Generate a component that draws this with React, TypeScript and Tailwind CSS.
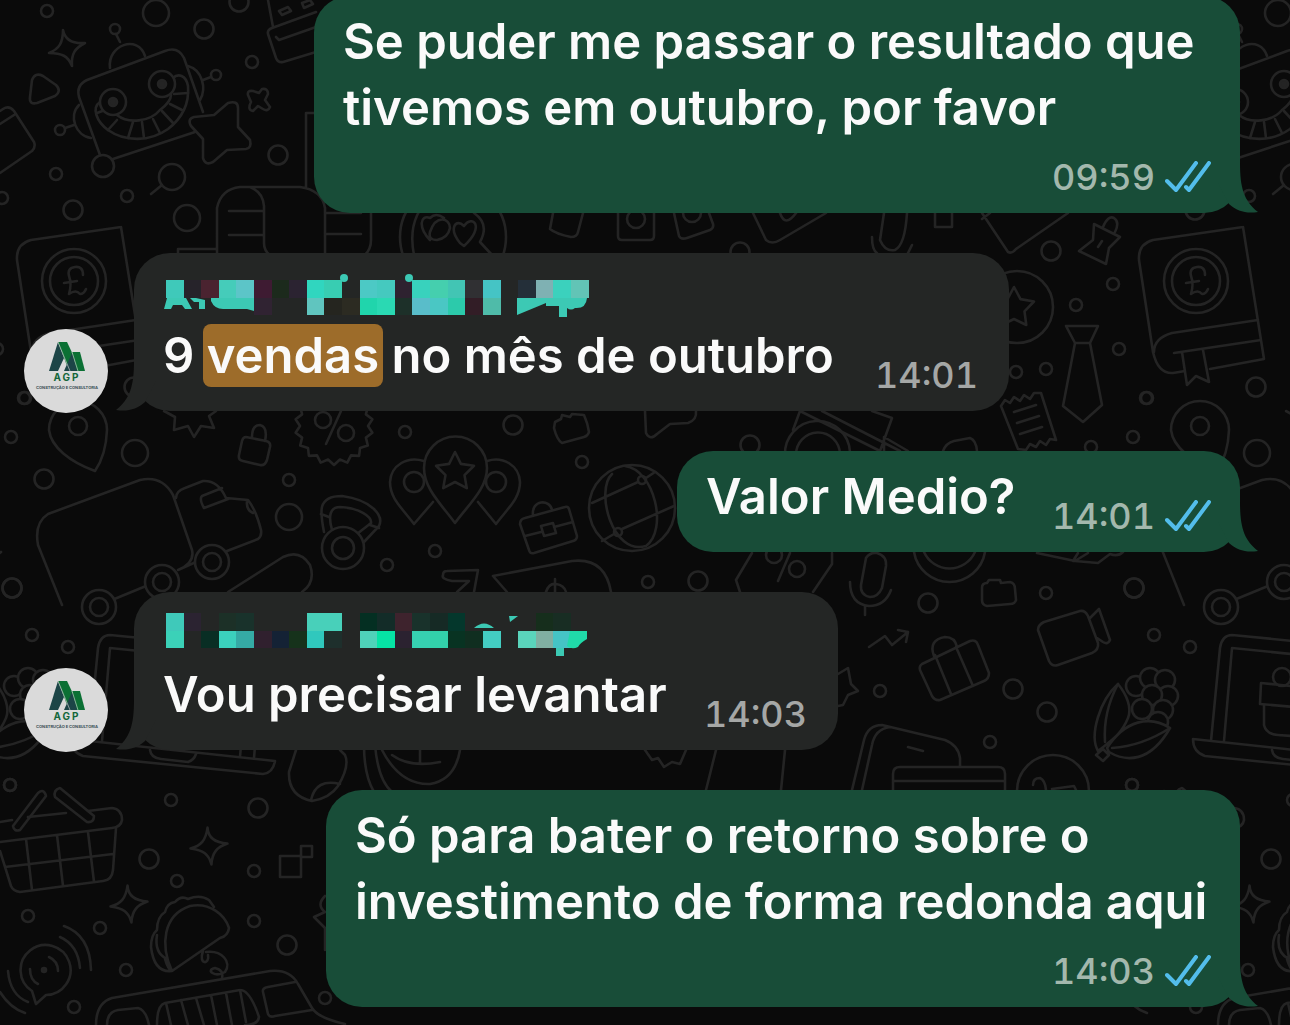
import type { ReactNode } from "react";
import clsx from "clsx";

const SMALL = [
  [47, 11], [252, 62], [56, 174], [127, 196], [2, 198], [25, 398], [11, 437], [405, 432], [289, 480],
  [582, 462], [387, 565], [435, 551], [648, 582], [1113, 284], [1076, 305], [1119, 349], [1146, 398],
  [1046, 369], [1016, 372], [1091, 447], [1046, 593], [880, 691], [990, 742], [1154, 635],
  [1190, 647], [1132, 785], [171, 800], [177, 881], [254, 871], [254, 921], [126, 970],
  [28, 916], [100, 928], [74, 1007], [325, 998],
];

const MEDIUM = [
  [204, 29], [239, 2], [278, 155], [73, 210], [44, 479], [513, 425], [12, 588], [1051, 251], [134, 387],
  [750, 445], [928, 603], [1134, 588], [1013, 689], [1047, 712], [698, 581], [258, 808], [149, 859],
  [287, 945], [740, 252],
];

const LARGE = [[156, 13], [172, 177], [187, 218], [135, 453], [289, 517]];

const KERNELS = [
  [1136, 686], [1150, 678], [1165, 680], [1168, 696], [1152, 695], [1163, 710], [1158, 722], [1142, 709],
];

const DOODLES = [
  // magnifier, play triangle, note
  "M162 185 L151 194",
  "M32 80 Q35 72 43 76 L56 85 Q62 91 55 96 L37 103 Q29 105 30 97 Z",
  "M0 173 L32 151 Q36 147 34 142 L14 111 Q9 105 3 109 L0 111 M14 115 L0 124",
  // robot
  "M100 155 L79 97 Q76 85 87 80 L165 51 Q178 46 184 58 L203 112 M113 159 L195 132",
  "M110 68 C107 45 138 34 145 56 M120 42 L116 34",
  "M79 105 C68 116 76 136 91 138 M74 125 L65 128 M188 66 C202 70 207 88 200 100 M203 80 L211 77",
  "M100 102 C91 108 97 122 108 130 C125 142 150 142 168 129 C186 115 189 98 188 86 C186 75 178 73 173 78 M117 115 C128 124 150 122 160 110 C168 104 171 98 171 95",
  "M97 113 L105 110 M108 130 L117 120 M128 138 L133 122 M144 138 L142 122 M160 133 L153 119 M173 123 L162 111 M182 110 L170 104 M188 93 L174 94",
  // cross
  "M253 91 L259 93 L262 89 Q268 88 268 94 L265 100 L270 107 Q268 112 263 109 L258 106 L253 111 Q247 110 251 102 L248 95 Q247 90 253 91 Z",
  // typewriter
  "M268 0 L273 27 M316 12 L272 28 Q267 30 268 34 L276 58 Q278 63 283 62 L316 52 M276 37 L279 40 L316 27 M279 11 L288 7 L291 11 L282 15 Z M302 3 L310 0 L313 4 L304 8 Z",
  // scroll
  "M217 255 V208 Q221 189 240 187 H300 Q322 190 325 208 V255 M250 187 Q263 192 264 206 V243 Q264 251 270 255 M229 211 H262 M229 235 H262 M327 213 H361 M327 234 H361 M371 212 V240 Q371 249 365 255 M306 187 V113 H320 M178 256 V249 H217",
  // book
  "M121 227 L31 240 Q16 244 17 260 L31 352 Q36 374 51 373 L63 371 M88 369 L142 359 L121 227 M136 320 L50 333 Q32 338 32 352 M139 340 L52 353 M60 352 L65 385 L74 376 L87 382 L81 350",
  "M83 275 Q83 266 75 267 Q67 268 69 276 Q72 284 69 294 Q76 289 80 294 Q84 294 86 289 M64 283 L77 281",
  // map pin
  "M95 471 Q106 455 107 430 A29 29 0 1 0 49 430 C51 447 70 462 95 471 Z",
  "M164 411 L175 417 L174 430 L188 426 L194 437 L201 426 L214 428 L209 416 L216 411",
  // padlock
  "M246 437 L266 441 Q271 442 270 447 L267 460 Q265 466 260 465 L243 461 Q238 460 239 455 L242 441 Q243 437 246 437 Z M252 437 Q252 425 260 425 Q268 427 265 441",
  "M341 411 L326 444",
  // pins group
  "M455 523 C440 503 424 488 424 468 A31 31 0 0 1 487 468 C487 488 470 503 455 523 Z",
  "M414 524 C401 507 390 498 390 482 C391 465 407 456 424 461 M414 524 L433 502 M496 524 C509 507 520 498 520 482 C519 465 503 456 487 461 M496 524 L478 502",
  // briefcase
  "M525 518 L565 507 Q568 506 569 509 L577 536 Q577 540 573 541 L534 553 Q530 554 529 550 L520 524 Q520 519 525 518 Z M525 536 L541 532 M554 527 L573 522 M541 526 L553 523 L556 533 L544 536 Z M533 516 C531 499 550 499 552 510",
  // globe
  "M612 474 C595 490 612 556 646 546 C668 530 655 470 625 466 M592 503 L638 482 M646 478 L655 472 M602 541 L614 534 M622 529 L674 506",
  // kettlebell
  "M324 532 C320 512 317 496 342 496 C372 500 384 516 379 526 L364 542 M332 530 C328 516 330 507 340 507 C360 508 372 517 371 523 L357 534 M321 514 L329 517 M370 525 L379 528",
  // truck
  "M62 605 L38 545 Q34 523 48 514 L140 480 Q162 475 173 495 L192 550 Q195 563 178 570 M112 600 L146 586 M178 570 L196 562",
  "M176 498 Q176 491 185 488 L203 481 Q218 480 226 498 L248 500 Q256 510 261 530 Q262 536 258 539 L227 551 M222 488 L202 496 Q199 499 204 508 L228 499 M247 501 Q246 510 253 513",
  "M228 592 L283 557 Q300 549 310 565 Q316 582 302 592",
  "M457 592 L469 581 L452 581 Q441 579 443 575 Q443 571 447 571 L478 570 L474 592",
  "M507 592 L493 576 L572 561 Q605 557 611 592 M546 592 Q549 583 556 584 Q564 585 566 592 M555 579 V592",
  // folders and bubbles
  "M555 422 L561 419 L562 415 L570 417 L572 414 L584 415 Q588 424 589 432 Q588 436 584 437 L562 443 Q557 440 554 428 Z",
  "M645 411 L646 433 Q650 441 657 434 L670 424 L688 423 Q697 420 696 411",
  "M553 213 L550 229 Q556 234 571 237 Q577 237 578 232 L583 213 M618 213 V236 Q618 240 622 240 H650 Q654 240 654 236 V213 M674 213 L679 236 Q681 240 687 238 L710 230 Q714 228 713 224 L709 213 M753 213 L766 240 Q772 245 780 240 L826 213 M780 213 Q785 228 796 213",
  "M884 213 L880 240 Q885 252 895 250 Q905 245 907 213 M872 237 Q872 250 877 253 M912 245 L908 253 M935 213 V227 H952 V213 M982 213 L1008 252 Q1012 254 1016 249 L1068 213 M982 219 L990 213",
  // hearts
  "M430 232 C436 214 450 218 450 228 Q448 238 437 240 Q428 240 430 232 Z M430 240 C418 228 420 214 430 218 Q436 212 444 218 M460 243 C448 228 456 218 464 226 C472 214 486 226 464 246 Z M414 255 C408 225 418 200 445 192 M474 213 Q490 224 480 242 L492 255",
  // pushpin, tie, receipt
  "M1094 224 L1120 237 L1109 248 L1106 264 L1079 251 L1093 240 Z M1103 227 Q1108 215 1114 218 Q1120 222 1115 232 M1098 247 L1102 241",
  "M1066 326 H1098 L1090 343 H1075 Z M1075 343 L1063 406 L1083 422 L1102 405 L1090 343",
  "M1001 406 L1005 400 L1010 403 L1014 397 L1020 401 L1024 395 L1030 399 L1034 393 L1041 393 L1056 440 L1050 439 L1046 445 L1040 441 L1036 447 L1030 444 L1026 450 L1018 449 Z M1014 412 L1036 405 M1017 423 L1039 416 M1020 434 L1042 427",
  "M800 411 L880 451 M822 411 L900 451 M793 430 L800 411 M880 451 L892 418 L872 411 M884 451 V437 L908 451 M943 451 Q946 443 954 441 L970 438 Q976 440 977 451",
  "M785 455 A32 32 0 0 1 850 452 M796 455 A22 22 0 0 1 840 454",
  // price tag, microphone
  "M752 553 L736 580 L740 592 M832 553 V564 L813 592 M790 553 L778 581",
  "M866 558 Q870 552 877 553 Q887 556 886 566 L882 588 Q878 597 870 597 Q860 595 861 585 Z M850 582 Q850 604 869 606 Q885 606 891 590 M865 607 V615",
  "M914 552 A36 36 0 0 0 985 552 M924 552 A28 28 0 0 0 975 552 M1037 553 L1075 561 L1088 553 M1073 561 L1078 553 M1075 561 L1098 563 L1110 554 Q1118 557 1123 552",
  "M982 588 Q982 583 987 583 L989 580 H1000 L1001 583 L1010 582 Q1015 583 1015 589 L1016 600 Q1015 604 1010 604 L987 606 Q982 605 982 600 Z",
  "M869 647 L885 636 L892 645 L908 632 M898 630 L908 632 L906 642",
  // suitcase, video camera
  "M922 664 L970 641 Q976 639 978 645 L989 673 Q989 679 984 681 L940 700 Q935 701 932 696 L920 670 Q919 666 922 664 Z M935 655 L951 694 M956 647 L973 686 M934 656 Q928 640 945 637 Q955 637 957 647",
  "M1038 630 Q1038 625 1044 622 L1080 611 Q1085 610 1088 616 L1098 643 Q1099 650 1092 653 L1058 665 Q1052 667 1049 661 Z M1090 618 L1099 609 L1110 640 Q1108 645 1103 642 L1097 638",
  // laptop
  "M1211 741 L1220 648 Q1222 635 1232 635 L1385 650 L1376 758 M1224 741 L1232 648 L1370 662 L1362 757 M1193 739 L1397 761 Q1395 773 1385 774 L1205 756 Q1193 752 1193 739 Z M1272 750 Q1273 758 1283 759 L1310 762 Q1316 760 1318 754 M1261 683 L1330 690 V710 L1260 704 Z M1264 706 L1264 725 Q1266 734 1278 735 L1320 738",
  // phone, card, call bubble
  "M852 790 L864 740 Q868 725 882 725 L945 740 Q958 745 960 758 V767 M862 790 L872 745 Q875 729 890 727 M908 747 L923 751 M893 790 V774 Q893 767 900 767 H998 Q1005 767 1005 774 V790 M893 781 H1003",
  "M1033 785 Q1033 778 1040 778 Q1045 780 1046 790 M1052 789 L1074 786 L1076 790 M716 750 L706 790 M785 750 L781 790",
  "M838 674 L848 668 L851 684 L858 691 L848 695 L843 705 L838 706",
  // egg, ball
  "M296 750 L289 772 Q288 796 312 801 Q330 798 338 786 Q350 766 345 755 L340 750 M311 800 Q316 778 340 784",
  "M364 745 Q364 775 374 792 M375 745 Q378 780 392 792 M382 750 Q400 785 430 784 Q455 780 460 750 M392 755 Q410 768 440 762 M420 750 V763 M645 750 L652 760 L658 758 L664 767 L672 762 L680 764 L686 750",
  // basket
  "M0 822 L12 820 M28 817 L66 813 M88 811 L112 808 Q122 809 122 820 Q121 827 112 828 L0 842 M116 828 L113 870 Q112 880 103 881 L20 892 Q13 891 11 886 L0 851 M26 839 L32 890 M57 835 L63 886 M88 832 L94 882 M5 867 L113 854",
  "M13 826 L38 793 Q44 788 46 796 L20 830 Q14 832 13 826 Z M60 788 Q53 790 55 797 L87 822 Q94 823 94 816 Z",
  "M280 856 H301 V877 H280 Z M301 846 H312 V857 H301 Z",
  // taco
  "M172 971 C160 945 163 915 190 906 C210 902 225 915 229 928 Q228 936 220 938 L172 971 Q154 973 151 947 Q151 935 157 930 Q157 917 165 912 Q167 903 175 902 Q181 895 188 899 Q200 894 209 900 L214 907 M157 935 Q154 953 167 959 M165 959 Q168 970 172 971 M203 951 C198 965 210 965 208 955 M206 952 C222 950 232 962 225 972 C215 978 205 970 215 968 Q224 970 222 978",
  // van
  "M96 1025 Q96 1003 112 998 L270 971 Q290 969 298 984 L312 1008 Q318 1018 345 1024 M107 1025 Q107 1012 118 1010 L138 1008 Q146 1010 149 1025 M157 1025 Q157 1005 165 1003 L240 990 Q250 990 259 1017 Q258 1025 245 1025 M166 1003 L171 1025 M181 1000 L188 1025 M196 998 L204 1025 M211 995 L217 1025 M226 993 L232 1025 M240 990 L246 1022 M263 992 Q262 988 268 987 L295 982 M263 992 L268 1014 Q270 1018 275 1016 L312 1010",
  // voice bubble
  "M32 991 A25 25 0 1 1 46 995 L36 1004 Z M60 937 Q78 945 80 968 M64 926 Q90 935 91 970 M8 971 Q10 995 28 1002 M0 992 Q10 1008 25 1013 M49 957 Q58 961 58 971 M30 969 Q30 980 38 984",
  "M325 896 Q316 905 325 912 L314 917 L325 928 V950",
];

const STAR = "M194 117 L214 115 L228 103 Q238 100 238 108 L238 127 L250 140 Q252 148 246 149 L227 150 L213 162 Q205 166 203 158 L203 139 L191 126 Q187 119 194 117 Z";
const HUSK = "M1118 684 C1100 700 1089 735 1098 751 C1112 740 1121 735 1128 718 C1132 708 1127 695 1118 684 Z M1109 752 C1126 762 1150 763 1170 728 C1150 715 1125 720 1107 748 Z M1103 749 L1109 755 L1103 761 L1096 755 Z";
const SPARKLE = "M-4 -18 C-2 -8 5 -4 18 -5 C8 0 4 6 5 18 C1 8 -5 5 -18 5 C-8 1 -4 -5 -4 -18 Z";

const starPoints = (cx: number, cy: number, outer: number, inner: number, count: number) =>
  Array.from({ length: count * 2 }, (_, i) => {
    const r = i % 2 ? inner : outer;
    const a = (i * Math.PI) / count - Math.PI / 2;
    return `${(cx + r * Math.cos(a)).toFixed(1)},${(cy + r * Math.sin(a)).toFixed(1)}`;
  }).join(" ");

function Wallpaper() {
  return (
    <svg className="absolute top-0 left-0 h-[1025px] w-[1290px]" viewBox="0 0 1290 1025" aria-hidden="true">
      <g id="tile" fill="none" stroke="#242424" strokeWidth="2.6" strokeLinecap="round" strokeLinejoin="round">
        {SMALL.map(([x, y]) => <circle key={`${x}-${y}`} cx={x} cy={y} r="6" />)}
        {MEDIUM.map(([x, y]) => <circle key={`${x}-${y}`} cx={x} cy={y} r="9.5" />)}
        {LARGE.map(([x, y]) => <circle key={`${x}-${y}`} cx={x} cy={y} r="13" />)}
        {DOODLES.map((d) => <path key={d} d={d} />)}
        <path d={STAR} fill="#0a0a0a" />
        {KERNELS.map(([x, y]) => <circle key={`${x}-${y}`} cx={x} cy={y} r="10" fill="#0a0a0a" />)}
        <path d={HUSK} fill="#0a0a0a" />
        <path d="M1118 684 Q1103 712 1105 742 M1112 748 Q1142 746 1170 728" />
        <path d={SPARKLE} transform="translate(67 48)" />
        <path d={SPARKLE} transform="translate(209 846) rotate(8)" />
        <path d={SPARKLE} transform="translate(129 904) rotate(8)" />
        <circle cx="10" cy="785" r="6" />
        <circle cx="103" cy="166" r="11" fill="#0a0a0a" />
        <circle cx="115" cy="29" r="5" />
        <circle cx="60" cy="130" r="5" />
        <circle cx="216" cy="75" r="5" />
        <circle cx="113" cy="102" r="13" fill="#0a0a0a" />
        <circle cx="113" cy="102" r="4" fill="#242424" />
        <circle cx="162" cy="84" r="13" fill="#0a0a0a" />
        <circle cx="162" cy="84" r="4" fill="#242424" />
        <circle cx="74" cy="281" r="32" />
        <circle cx="74" cy="281" r="24" />
        <circle cx="78" cy="426" r="9" />
        <circle cx="453" cy="237" r="53" />
        <circle cx="636" cy="219" r="9" />
        <circle cx="692" cy="213" r="9" />
        <circle cx="1017" cy="307" r="36" />
        <polygon points={starPoints(1014, 308, 21, 11, 5)} />
        <polygon points={starPoints(334, 426, 39, 34, 18)} />
        <circle cx="323" cy="420" r="8" />
        <circle cx="346" cy="433" r="8" />
        <polygon points={starPoints(455, 472, 20, 10, 5)} />
        <circle cx="414" cy="482" r="10" />
        <circle cx="496" cy="482" r="10" />
        <circle cx="632" cy="508" r="43" />
        <circle cx="642" cy="480" r="4" />
        <circle cx="618" cy="532" r="4" />
        <circle cx="343" cy="548" r="21" fill="#0a0a0a" />
        <circle cx="343" cy="548" r="11" />
        <circle cx="212" cy="562" r="17" fill="#0a0a0a" />
        <circle cx="212" cy="562" r="9" />
        <circle cx="162" cy="582" r="17" fill="#0a0a0a" />
        <circle cx="162" cy="582" r="9" />
        <circle cx="99" cy="607" r="17" fill="#0a0a0a" />
        <circle cx="99" cy="607" r="9" />
        <circle cx="774" cy="555" r="8" />
        <circle cx="797" cy="569" r="8" />
        <circle cx="1282" cy="677" r="9" />
        <circle cx="1053" cy="791" r="36" />
        <circle cx="44" cy="970" r="2" fill="#242424" />
      </g>
      <use href="#tile" x="1122" />
      <use href="#tile" x="-1122" />
    </svg>
  );
}

function Ticks() {
  return (
    <svg className="h-8 w-[46px]" viewBox="0 0 46 32" fill="none" stroke="#53bdeb" strokeWidth="4" strokeLinecap="round" strokeLinejoin="round" aria-label="Lida">
      <path d="M2 20 L11 29 L31 2" />
      <path d="M21 26 L24 29 L44 2" />
    </svg>
  );
}

function Stamp({ time, sent }: { time: string; sent?: boolean }) {
  return (
    <div className={clsx("flex h-7 items-center gap-[10px] text-[36px] leading-7 font-medium tabular-nums", sent ? "text-[#a3b8ad]" : "mr-[2px] text-[#a5a7a6]")}>
      <time>{time}</time>
      {sent && <Ticks />}
    </div>
  );
}

function Sent({ width, children }: { width: string; children: ReactNode }) {
  return (
    <div className={clsx("relative ml-auto w-full rounded-[36px] bg-[#184d38] px-[29px] pt-[13px] pb-[22px]", width)}>
      <svg className="absolute -right-[18px] bottom-0 h-[50px] w-10" viewBox="0 0 40 50" fill="#184d38" aria-hidden="true">
        <path d="M22 0 C22 25 26 38 40 49 C28 51 19 48 11 41 L0 20 V0 Z" />
      </svg>
      {children}
    </div>
  );
}

function Avatar() {
  return (
    <svg className="-mb-[2px] size-[84px] shrink-0" viewBox="0 0 84 84" role="img" aria-label="AGP">
      <circle cx="42" cy="42" r="42" fill="#dadada" />
      <path d="M34 13 L40 29 L34 42 H25 Z" fill="#1c4547" />
      <path d="M34 13 H43 L51 30 L45 42 Z" fill="#0b7034" />
      <path d="M48 24 L54 42 H40 Z" fill="#1c4547" />
      <path d="M48 23 H56 L61 42 H53 Z" fill="#0b7034" />
      <path d="M34 13 L46 42 M48 23 L54 42" stroke="#dadada" strokeWidth="0.6" />
      <text x="43" y="52" textAnchor="middle" fontSize="10" fontWeight="700" letterSpacing="2" fill="#14673a">AGP</text>
      <text x="43" y="60" textAnchor="middle" fontSize="4" fontWeight="700" fill="#3b4f55">CONSTRUÇÃO E CONSULTORIA</text>
    </svg>
  );
}

function Received({ width, children }: { width: string; children: ReactNode }) {
  return (
    <div className="flex items-end gap-[26px]">
      <Avatar />
      <div className={clsx("relative w-full rounded-[36px] bg-[#242625] px-[29px] pt-[13px] pb-[22px]", width)}>
        <svg className="absolute bottom-0 -left-[18px] h-[50px] w-10" viewBox="0 0 40 50" fill="#242625" aria-hidden="true">
          <path d="M18 0 C18 25 14 38 0 49 C12 51 21 48 29 41 L40 20 V0 Z" />
        </svg>
        {children}
      </div>
    </div>
  );
}

type Cell = [col: number, color: string];

// Sender names are pixelated: two rows of 24 blocks each
function Mosaic({ top, bottom, y, children }: { top: Cell[]; bottom: Cell[]; y: number; children?: ReactNode }) {
  return (
    <svg className="block h-[57px] w-[430px] overflow-visible" viewBox="0 0 430 57" shapeRendering="crispEdges" aria-hidden="true">
      {top.map(([col, color]) => (
        <rect key={col} x={3 + col * 17.6} y={y} width="17.8" height="18" fill={color} />
      ))}
      {bottom.map(([col, color]) => (
        <rect key={col} x={3 + col * 17.6} y={y + 18} width="17.8" height="17" fill={color} />
      ))}
      {children}
    </svg>
  );
}

const FIRST_TOP: Cell[] = [
  [0, "#3fc9ba"], [1, "#26232a"], [2, "#4a2330"], [3, "#45ccba"], [4, "#5cc5c8"], [5, "#3e1b32"], [6, "#1c2a1c"],
  [7, "#2b2331"], [8, "#30d6bf"], [9, "#38cdb2"], [11, "#4cc9c5"], [12, "#45c9bf"], [13, "#2e2230"],
  [14, "#38d2bd"], [15, "#45cfae"], [16, "#42c5b4"], [17, "#303033"], [18, "#45c4c5"], [20, "#242f39"],
  [21, "#7fb1b3"], [22, "#3bd1bd"], [23, "#62c4b6"],
];
const FIRST_BOTTOM: Cell[] = [
  [5, "#302332"], [8, "#60c5bf"], [9, "#25251f"], [10, "#2c2b22"], [11, "#20d5ac"],
  [12, "#2ad9b3"], [13, "#1d3029"], [14, "#59bdca"], [15, "#4ac7c4"], [16, "#2ccaab"], [17, "#321d26"], [18, "#4fbba9"],
];
const SECOND_TOP: Cell[] = [
  [0, "#3fc9ba"], [1, "#2b2331"], [3, "#1c3027"], [4, "#19322b"], [8, "#48d0ba"], [9, "#48d0ba"],
  [11, "#042f22"], [12, "#132c28"], [13, "#3e232d"], [14, "#19322b"], [15, "#162a25"], [16, "#04372c"],
  [21, "#162e1c"], [22, "#182d23"],
];
const SECOND_BOTTOM: Cell[] = [
  [0, "#3bd1b8"], [2, "#092e24"], [3, "#3bd1bd"], [4, "#35aaa5"], [5, "#30202e"], [6, "#142235"], [7, "#16321b"],
  [8, "#30c8bd"], [9, "#1e2f2c"], [11, "#4fd2b9"], [12, "#06e3a5"], [13, "#2b2230"], [14, "#36d0b1"],
  [15, "#32d1aa"], [16, "#083322"], [17, "#102e20"], [18, "#43cdc2"], [20, "#5ad4bb"], [21, "#80afa2"], [22, "#45c4c5"],
];

export default function App() {
  return (
    <main className="relative min-h-screen overflow-hidden bg-[#0a0a0a] font-['Inter',sans-serif] text-[49px] leading-[66px] font-semibold text-[#fafafa]">
      <Wallpaper />
      <div className="relative -mt-1 flex flex-col gap-10 pr-[50px] pb-[18px] pl-6">
        <Sent width="max-w-[926px]">
          <p className="whitespace-nowrap">
            Se puder me passar o resultado que
            <br />
            tivemos em outubro, por favor
          </p>
          <div className="mt-[22px] flex justify-end">
            <Stamp time="09:59" sent />
          </div>
        </Sent>

        <Received width="max-w-[875px]">
          <Mosaic top={FIRST_TOP} bottom={FIRST_BOTTOM} y={14}>
            <g shapeRendering="auto" fill="#3cc9b4">
              <path d="M4 32 H23 L29 43 H22 L19 39 H10 L8 43 H1 Z M27 32 H33 L42 34 V43 H36 V36 H31 Z M48 32 H91 V45 L84 43 H62 Q52 44 48 35 Z" />
              <circle cx="181" cy="12" r="4" />
              <circle cx="246" cy="12" r="4" />
              <path d="M354 32 H424 Q423 43 412 42 Q408 45 404 42 V51 H396 V40 H383 V37 L354 49 Z" />
            </g>
          </Mosaic>
          <div className="flex items-end justify-between">
            <p className="whitespace-nowrap">
              9 <mark className="-mx-1 rounded-lg bg-[#9d6c2a] px-1 py-[2px] text-[#fafafa]">vendas</mark> no mês de outubro
            </p>
            <Stamp time="14:01" />
          </div>
        </Received>

        <Sent width="max-w-[563px]">
          <div className="flex items-end justify-between">
            <p className="whitespace-nowrap">Valor Medio?</p>
            <Stamp time="14:01" sent />
          </div>
        </Sent>

        <Received width="max-w-[704px]">
          <Mosaic top={SECOND_TOP} bottom={SECOND_BOTTOM} y={8}>
            <g shapeRendering="auto" fill="#3cc9b4">
              <path d="M311 23 Q321 14 331 23 Z M346 11 H355 L347 17 Z M393 43 H401 V51 H393 Z" />
              <path d="M407 26 H424 V34 Q417 38 415 42 Q409 45 404 41 Z" fill="#20daa9" />
            </g>
          </Mosaic>
          <div className="flex items-end justify-between">
            <p className="whitespace-nowrap">Vou precisar levantar</p>
            <Stamp time="14:03" />
          </div>
        </Received>

        <Sent width="max-w-[914px]">
          <p className="whitespace-nowrap">
            Só para bater o retorno sobre o
            <br />
            investimento de forma redonda aqui
          </p>
          <div className="mt-[22px] flex justify-end">
            <Stamp time="14:03" sent />
          </div>
        </Sent>
      </div>
    </main>
  );
}
